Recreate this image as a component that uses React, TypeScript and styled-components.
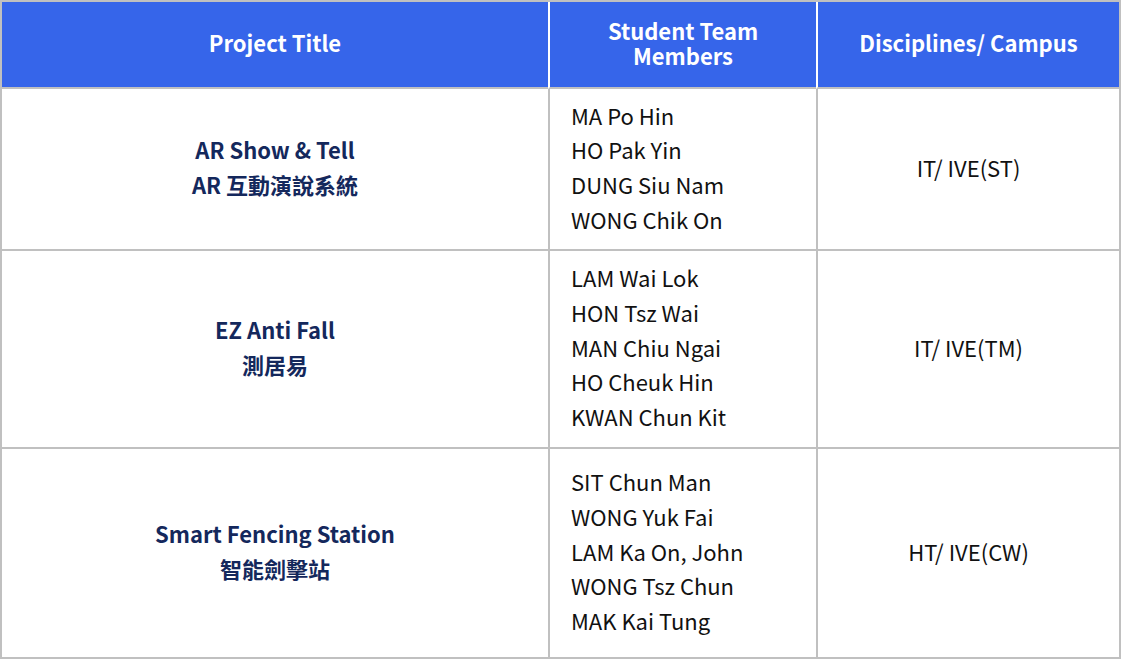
import React, { ReactElement } from 'react';
import styled, { createGlobalStyle } from 'styled-components';

interface Project {
  title: string;
  titleZh: string;
  members: string[];
  campus: string;
  height: number;
}

const PROJECTS: Project[] = [
  {
    title: 'AR Show & Tell',
    titleZh: 'AR 互動演說系統',
    members: ['MA Po Hin', 'HO Pak Yin', 'DUNG Siu Nam', 'WONG Chik On'],
    campus: 'IT/ IVE(ST)',
    height: 160,
  },
  {
    title: 'EZ Anti Fall',
    titleZh: '測居易',
    members: ['LAM Wai Lok', 'HON Tsz Wai', 'MAN Chiu Ngai', 'HO Cheuk Hin', 'KWAN Chun Kit'],
    campus: 'IT/ IVE(TM)',
    height: 196,
  },
  {
    title: 'Smart Fencing Station',
    titleZh: '智能劍擊站',
    members: ['SIT Chun Man', 'WONG Yuk Fai', 'LAM Ka On, John', 'WONG Tsz Chun', 'MAK Kai Tung'],
    campus: 'HT/ IVE(CW)',
    height: 208,
  },
];

const GlobalStyle = createGlobalStyle`
  body {
    margin: 0;
    background: #fff;
    font-family: 'Noto Sans CJK TC', 'Noto Sans', sans-serif;
  }
`;

function App(): ReactElement {
  return (
    <>
      <GlobalStyle />
      <Table>
        <colgroup>
          <col style={{ width: 546 }} />
          <col style={{ width: 268 }} />
          <col style={{ width: 303 }} />
        </colgroup>
        <thead>
          <tr>
            <Th>Project Title</Th>
            <Th>
              Student Team
              <br />
              Members
            </Th>
            <Th>Disciplines/ Campus</Th>
          </tr>
        </thead>
        <tbody>
          {PROJECTS.map((p, index) => (
            <Row key={index} $height={p.height} $last={index === PROJECTS.length - 1}>
              <TitleCell>
                {p.title}
                <br />
                {p.titleZh}
              </TitleCell>
              <MemberCell>
                {p.members.map(m => (
                  <div key={m}>{m}</div>
                ))}
              </MemberCell>
              <CampusCell>{p.campus}</CampusCell>
            </Row>
          ))}
        </tbody>
      </Table>
    </>
  );
}

const Table = styled.table`
  width: 1121px;
  table-layout: fixed;
  border-collapse: separate;
  border-spacing: 0;
  border: 2px solid #c0c0c0;
`;

const Th = styled.th`
  height: 81px;
  padding: 0 10px 4px;
  background-color: #3665ea;
  color: #fff;
  font-size: 22px;
  font-weight: 700;
  line-height: 25px;
  text-align: center;
  vertical-align: middle;
  border-bottom: 2px solid #c0c0c0;

  & + & {
    border-left: 2px solid #fff;
  }
`;

const Row = styled.tr<{ $height: number; $last: boolean }>`
  height: ${({ $height, $last }) => $height + ($last ? 0 : 2)}px;

  & > td {
    border-bottom: ${({ $last }) => ($last ? 'none' : '2px solid #c0c0c0')};
  }
`;

const Cell = styled.td`
  padding: 0 0 4px;
  font-size: 22px;
  line-height: 34.7px;
  vertical-align: middle;

  & + & {
    border-left: 2px solid #c0c0c0;
  }
`;

const TitleCell = styled(Cell)`
  text-align: center;
  font-weight: 700;
  color: #14285c;
`;

const MemberCell = styled(Cell)`
  padding-left: 21px;
  color: #111;
`;

const CampusCell = styled(Cell)`
  text-align: center;
  color: #111;
`;

export default App;
